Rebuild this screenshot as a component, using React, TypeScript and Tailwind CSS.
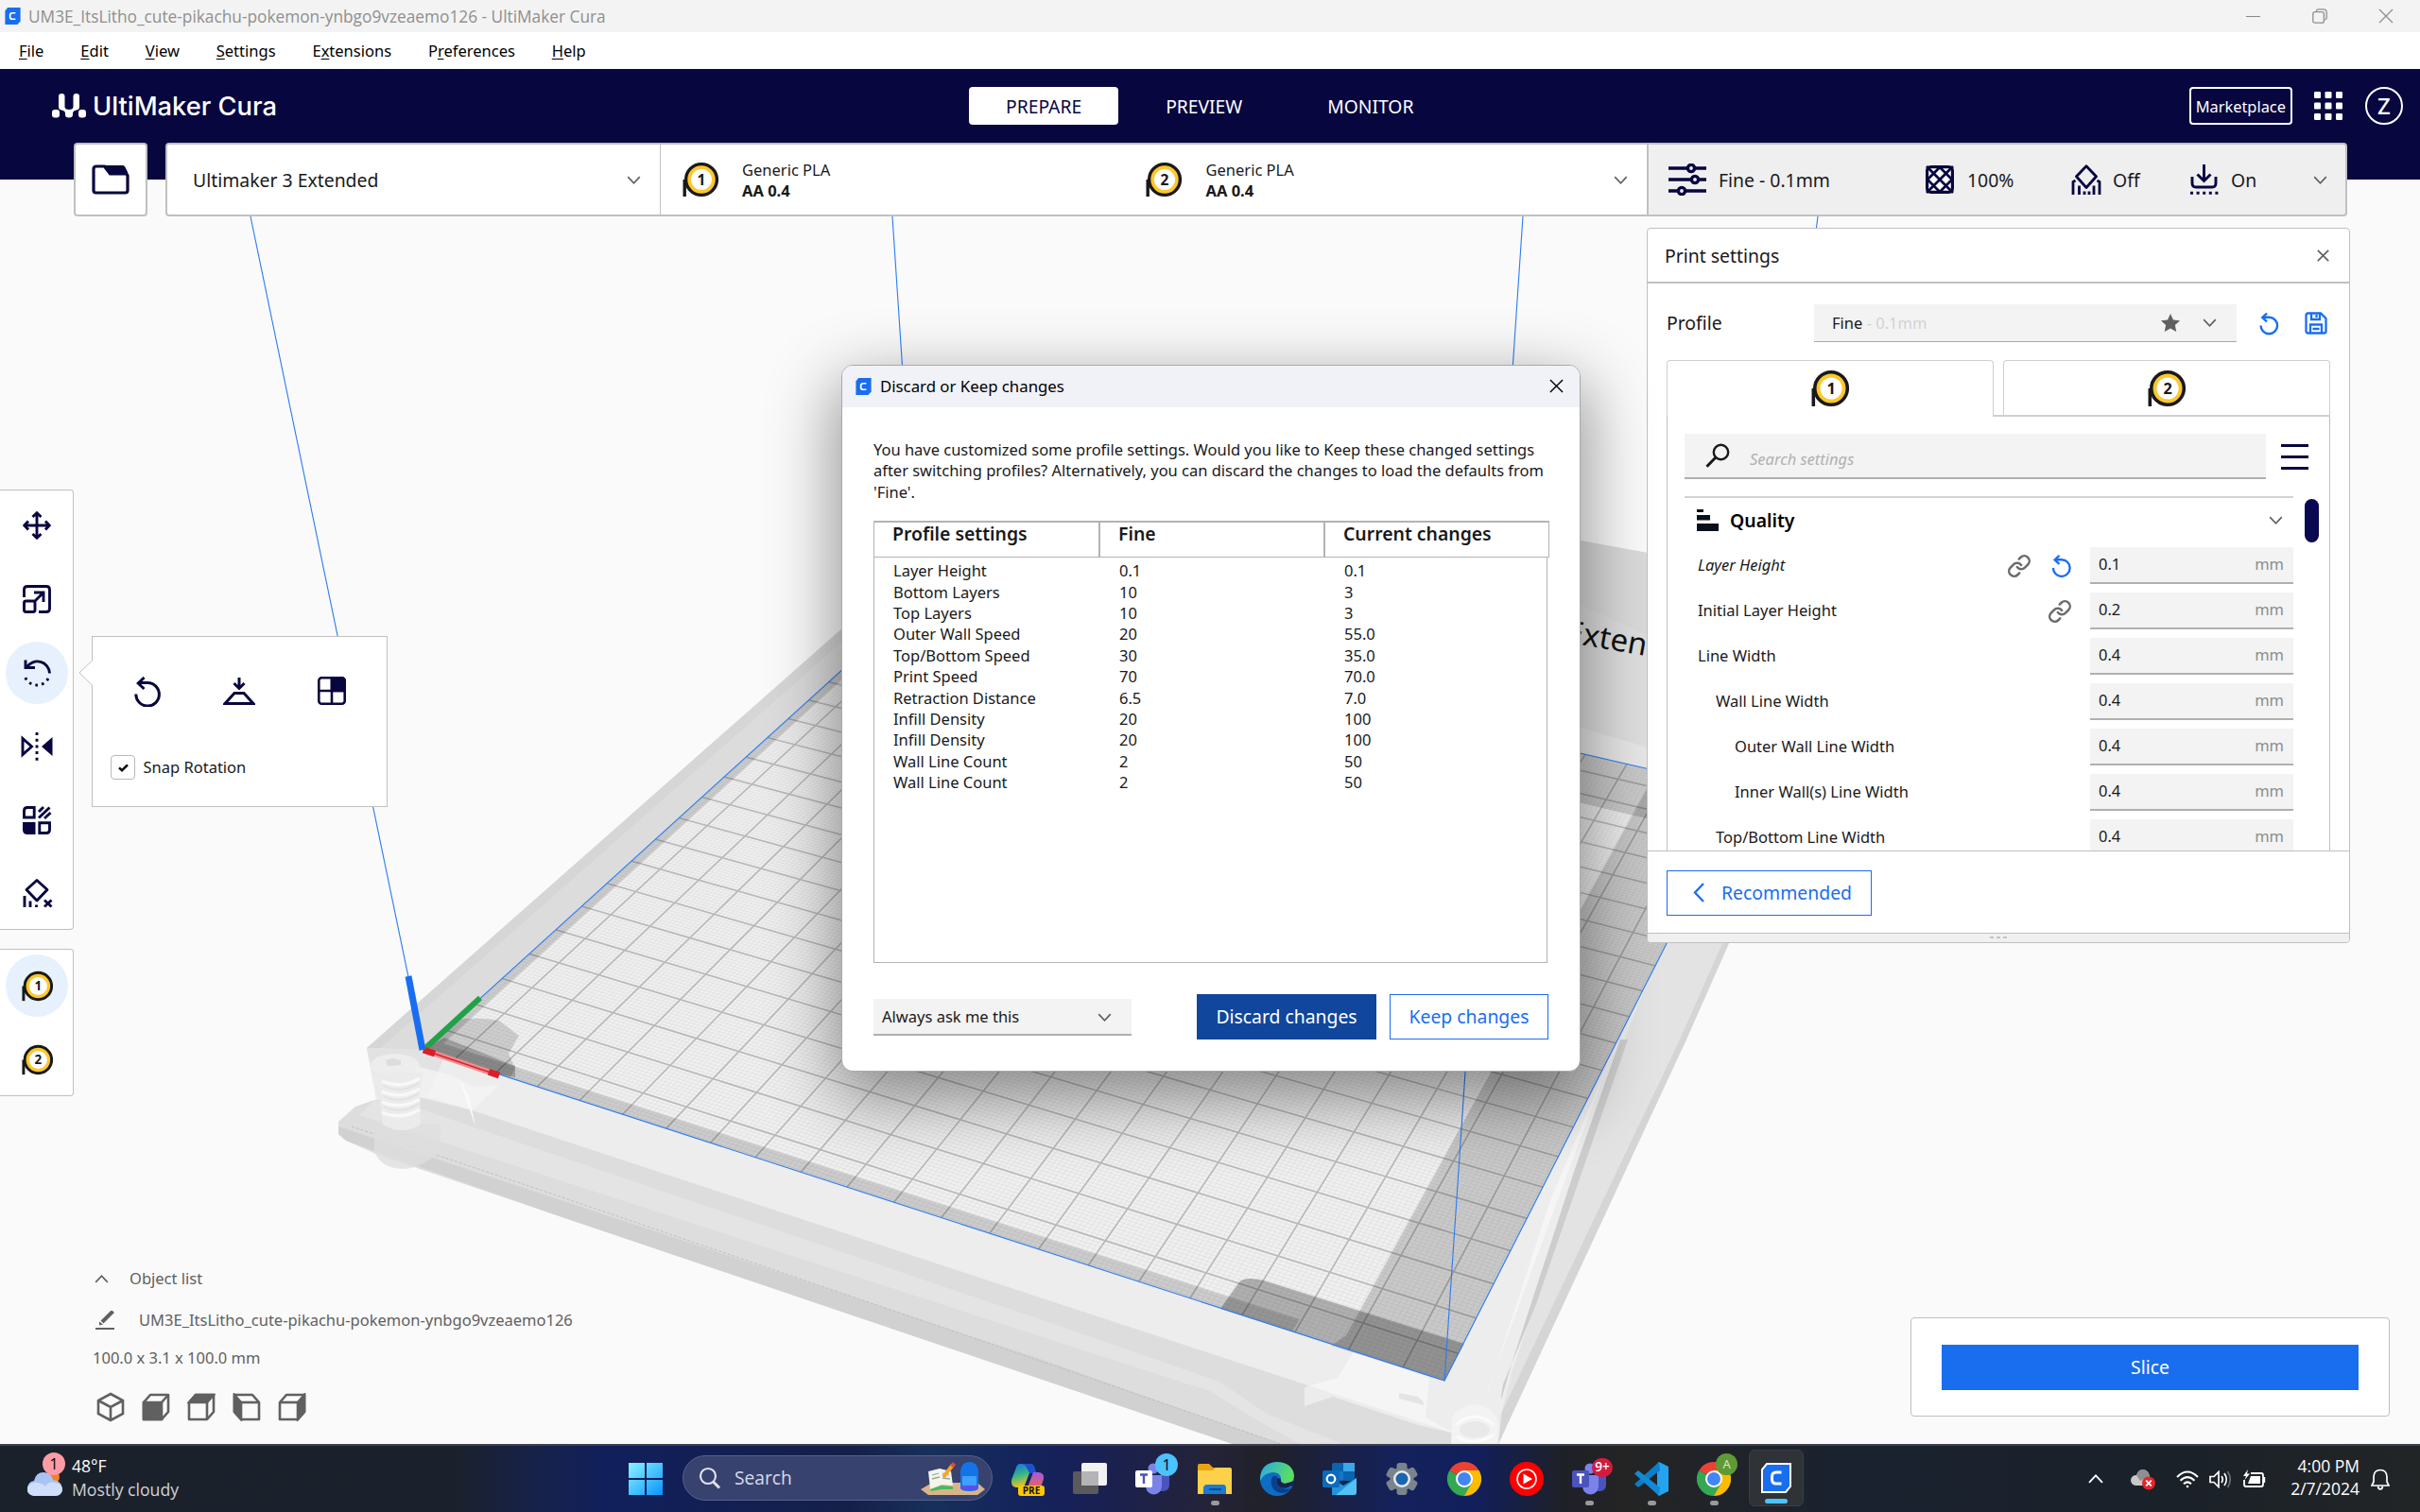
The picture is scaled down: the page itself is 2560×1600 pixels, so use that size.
import React from "react";
import { Link } from "lucide-react";

const NAVY = "#08063f";
const BLUE = "#196ef0";

/* ------------------------------------------------------------------ */
/* Small icons                                                          */
/* ------------------------------------------------------------------ */

type IconProps = { className?: string; children?: React.ReactNode; box?: string; sw?: number };

function Svg({ className = "", children, box = "0 0 30 30", sw = 2.6 }: IconProps) {
  return (
    <svg className={`shrink-0 ${className}`} viewBox={box} fill="none" stroke="currentColor" strokeWidth={sw}>
      {children}
    </svg>
  );
}

const Chevron = ({ className = "" }: { className?: string }) => (
  <Svg className={className} box="0 0 16 10" sw={1.8}>
    <path d="M1 1.2 8 8.6 15 1.2" />
  </Svg>
);

const Cross = ({ className = "", sw = 1.6 }: { className?: string; sw?: number }) => (
  <Svg className={className} box="0 0 16 16" sw={sw}>
    <path d="M1 1 15 15M15 1 1 15" />
  </Svg>
);

function Spool({ n, className = "h-[38px] w-[38px]" }: { n: number; className?: string }) {
  return (
    <svg className={`shrink-0 ${className}`} viewBox="0 0 38 38">
      <path d="M2.2 19V37" stroke="#191919" strokeWidth="3.4" />
      <circle cx="20" cy="19" r="16.4" fill="#ffc72a" stroke="#191919" strokeWidth="3.4" />
      <circle cx="20" cy="19" r="11" fill="#fff" />
      <text x="20" y="24.6" textAnchor="middle" fontSize="15.5" fontWeight="700" fontFamily="Noto Sans, sans-serif" fill="#191919">
        {n}
      </text>
    </svg>
  );
}

const Reset = ({ className = "" }: { className?: string }) => (
  <Svg className={className} box="0 0 22 25" sw={2.5}>
    <path d="M1.6 14.6A9.2 9.2 0 1 0 10.8 5.4H3.4" />
    <path d="M8.4 1 3.4 5.6 8.4 10.2" />
  </Svg>
);

function CuraLogo({ className = "" }: { className?: string }) {
  return (
    <svg className={`shrink-0 ${className}`} viewBox="0 0 18 20">
      <path d="M3 0H18V16L14.5 20H0V4Z" fill={BLUE} />
      <path d="M12.2 6.4H8.6Q5.8 6.4 5.8 9.2V10.8Q5.8 13.6 8.6 13.6H12.2" fill="none" stroke="#fff" strokeWidth="1.9" />
    </svg>
  );
}

/* ------------------------------------------------------------------ */
/* Build plate                                                          */
/* ------------------------------------------------------------------ */

const FL = [448, 1111];
const FR = [1528, 1461];
const BR = [1845, 837];
const BL = [971, 636];

/* Projects plate coordinates (0..1, 0..1) to the viewport. */
function makeProjection() {
  const dx1 = FR[0] - BR[0], dx2 = BL[0] - BR[0], dx3 = FL[0] - FR[0] + BR[0] - BL[0];
  const dy1 = FR[1] - BR[1], dy2 = BL[1] - BR[1], dy3 = FL[1] - FR[1] + BR[1] - BL[1];
  const det = dx1 * dy2 - dx2 * dy1;
  const g = (dx3 * dy2 - dx2 * dy3) / det;
  const h = (dx1 * dy3 - dx3 * dy1) / det;
  const a = FR[0] - FL[0] + g * FR[0], b = BL[0] - FL[0] + h * BL[0];
  const d = FR[1] - FL[1] + g * FR[1], e = BL[1] - FL[1] + h * BL[1];
  return (u: number, v: number) => {
    const w = g * u + h * v + 1;
    return `${((a * u + b * v + FL[0]) / w).toFixed(2)} ${((d * u + e * v + FL[1]) / w).toFixed(2)}`;
  };
}
const project = makeProjection();

function gridPath(start: number, step: number) {
  let d = "";
  for (let mm = start; mm < 215; mm += step) {
    const t = mm / 215;
    d += `M${project(t, 0)}L${project(t, 1)}M${project(0, t)}L${project(1, t)}`;
  }
  return d;
}
const quad = (u0: number, v0: number, u1: number, v1: number) =>
  `M${project(u0, v0)}L${project(u1, v0)}L${project(u1, v1)}L${project(u0, v1)}Z`;

function Scene() {
  return (
    <svg className="absolute inset-0 h-full w-full" viewBox="0 73 2560 1455" preserveAspectRatio="none">
      {/* back and left walls */}
      <path d="M900 430 1672 572 1760 590V830L900 640Z" fill="#dedede" />
      <path d="M1672 572 1760 588V680L1672 640Z" fill="#dadada" />
      <path d="M1672 770 1760 796V830L1672 805Z" fill="#e6e6e6" />
      <path d="M891 665 388 1109 396 1150 448 1111 971 636Z" fill="#dcdcdc" />
      <path d="M891 665 388 1109 390 1120 891 679Z" fill="#d6d6d6" />
      <text transform="translate(1655 679) rotate(10)" fontSize="33" fontFamily="Noto Sans, sans-serif" fill="#111">Extended</text>

      {/* right wall */}
      <path d="M1829 998 1585 1528H1500L1528 1461 1760 990Z" fill="#ededed" />
      <path d="M1829 998 1784 1100 1585 1528H1580L1600 1450 1722 1090 1760 998Z" fill="#e3e3e3" />
      <path d="M1829 998 1784 1100 1585 1528 1586 1500 1777 1100 1822 998Z" fill="#d5d5d5" />
      <path d="M1722 1100 1714 1100 1665 1240 1600 1440 1587 1485 1590 1465 1625 1380Z" fill="#cdcdcd" />
      <path d="M1704 1118 1574 1470 1570 1485 1640 1270Z" fill="#f5f5f5" />

      {/* front rail */}
      <path d="M388 1109 448 1111 1528 1461 1590 1480 1585 1528H1304L580 1283 400 1222 366 1207 358 1200V1187L376 1171 400 1176Z" fill="#ededed" />
      <path d="M388 1109 448 1111 470 1118 450 1165 400 1160Z" fill="#e2e2e2" />
      <path d="M396 1164 460 1162 1100 1373 1539 1517 1540 1528H1304L580 1283 400 1222 366 1207 358 1200V1187L376 1171Z" fill="#dddddd" />
      <path d="M396 1164 440 1172 1100 1396 1290 1462 1340 1496 1420 1528H1375L1325 1500 1280 1472 1100 1414 380 1180Z" fill="#e4e4e4" />
      <path d="M358 1192 1100 1438 1355 1528H1304L580 1283 366 1207 358 1200Z" fill="#d1d1d1" />
      <path d="M372 1192 580 1262 1100 1440 1355 1528" stroke="#c0c0c0" fill="none" strokeWidth="1" strokeDasharray="3 2" />
      <path d="M396 1200V1218Q402 1236 426 1237 450 1236 466 1216V1190L400 1186Z" fill="#dfdfdf" opacity="0.8" />
      <path d="M440 1128 478 1138 500 1150 528 1148 500 1175 440 1160Z" fill="#f4f4f4" opacity="0.8" />
      <path d="M486 1142 496 1160 503 1192 492 1160Z" fill="#fafafa" />

      {/* bed springs */}
      <ellipse cx="418" cy="1128" rx="26" ry="13" fill="#f0f0f0" opacity="0.8" />
      <path d="M394 1136 402 1164 405 1190Q425 1202 445 1190L444 1160 448 1135Z" fill="#ebebeb" />
      {[1144, 1155, 1166, 1177].map((y) => (
        <path key={y} d={`M404 ${y}Q424 ${y + 9} 444 ${y - 3}`} stroke="#f8f8f8" strokeWidth="3.5" fill="none" />
      ))}
      {[1149, 1160, 1171].map((y) => (
        <path key={y} d={`M406 ${y}Q424 ${y + 9} 443 ${y - 3}`} stroke="#dedede" strokeWidth="1.2" fill="none" />
      ))}
      <path d="M408 1122 415 1120 424 1122V1127L410 1128Z" fill="#dcdcdc" />
      <path d="M1432 1430 1512 1458 1508 1500 1539 1517 1500 1508 1410 1478 1380 1488V1468L1415 1458Z" fill="#fff" opacity="0.45" />
      <path d="M1480 1474 1500 1478 1506 1484V1487L1480 1480Z" fill="#e4e4e4" />
      <path d="M1535 1528 1536 1500Q1545 1486 1562 1486 1580 1490 1585 1505L1584 1528Z" fill="#f3f3f3" />
      <ellipse cx="1560" cy="1513" rx="16" ry="9" fill="#e9e9e9" />
      <path d="M1541 1520Q1560 1532 1580 1518M1540 1508Q1560 1490 1580 1508" stroke="#fbfbfb" strokeWidth="3" fill="none" />

      {/* plate and grid */}
      <path d={quad(0, 0, 1, 1)} fill="#f0f0f0" />
      <path d={gridPath(0.5, 1)} stroke="#dedede" strokeWidth="0.7" />
      <path d={gridPath(7.5, 10)} stroke="#b9b9b9" strokeWidth="1.7" />

      {/* translucent plate areas */}
      <path d={quad(0, 0, 0.011, 1)} fill="#000" opacity="0.15" />
      <path d={quad(0.011, 0, 0.87, 0.016)} fill="#000" opacity="0.15" />
      <path d="M1424 1413 1577 1135 1766 791 1845 837 1528 1461 1408 1424Z" fill="#000" opacity="0.16" />
      <path d={quad(0.8, 0.9, 1, 1)} fill="#000" opacity="0.15" />
      <path d="M1291 1385 1310 1358Q1315 1350 1337 1355L1549 1422 1528 1461Z" fill="#000" opacity="0.27" />
      <path d="M448 1111 482 1079Q510 1076 528 1080L549 1096 538 1115 545 1130 540 1140Z" fill="#000" opacity="0.14" />
      <path d="M448 1111 470 1098 545 1128 545 1140 530 1137Z" fill="#000" opacity="0.22" />

      {/* build volume */}
      <g stroke="#2a7bf2" strokeWidth="1.1" fill="none">
        <path d={quad(0, 0, 1, 1)} />
        <path d="M448 1111 265 229M971 636 944 229M1528 1461 1611 229M1845 837 1923 229" />
      </g>

      {/* axes */}
      <path d="M448 1111 508 1056" stroke="#24a148" strokeWidth="6" />
      <path d="M448 1111 525 1137" stroke="#f08c90" strokeWidth="6" />
      <path d="M448 1111 525 1137" stroke="#da1e28" strokeWidth="1.5" />
      <path d="M448 1111 460 1115M517 1134.3 528 1138" stroke="#da1e28" strokeWidth="7" />
      <path d="M447 1111 432 1033" stroke={BLUE} strokeWidth="7" />
    </svg>
  );
}

/* ------------------------------------------------------------------ */
/* Window chrome and header                                             */
/* ------------------------------------------------------------------ */

function TitleBar() {
  return (
    <div className="flex h-[34px] shrink-0 items-center bg-[#f3f3f3] pl-[5px] pr-[28px] text-[#8f8f8f]">
      <CuraLogo className="h-[18px] w-[17px]" />
      <span className="ml-2 mt-px font-['Open_Sans',sans-serif] text-[17.3px] leading-none">
        UM3E_ItsLitho_cute-pikachu-pokemon-ynbgo9vzeaemo126 - UltiMaker Cura
      </span>
      <div className="ml-auto flex items-center gap-[54.5px]">
        <div className="h-px w-[15px] bg-[#8a8a8a]" />
        <Svg className="h-4 w-4" box="0 0 16 16" sw={1.3}>
          <rect x="0.8" y="3.6" width="11.6" height="11.6" rx="2" />
          <path d="M4.4 3V2.6Q4.8.8 6.6.8H12Q15.2.8 15.2 4V9.6Q15.2 11.4 13.4 12" />
        </Svg>
        <Cross className="h-4 w-4" sw={1.3} />
      </div>
    </div>
  );
}

const MENU: [string, string, string][] = [
  ["", "F", "ile"],
  ["", "E", "dit"],
  ["", "V", "iew"],
  ["", "S", "ettings"],
  ["E", "x", "tensions"],
  ["P", "r", "eferences"],
  ["", "H", "elp"],
];

function MenuBar() {
  return (
    <div className="flex h-[39px] shrink-0 items-center gap-[38.9px] bg-white pl-5 pt-0.5 text-[16.5px] text-black">
      {MENU.map(([a, b, c]) => (
        <span key={b}>
          {a}
          <span className="underline decoration-1 underline-offset-2">{b}</span>
          {c}
        </span>
      ))}
    </div>
  );
}

function Header() {
  return (
    <div className="relative flex h-[78px] shrink-0 items-center text-white">
      <div className="flex w-[1025px] items-center pl-[55px]">
        <svg className="h-[26px] w-9" viewBox="0 0 36 26" fill="#fff">
          <rect x="0" y="17" width="8" height="8.5" rx="3" />
          <rect x="28" y="17" width="8" height="8.5" rx="3" />
          <path d="M7 3Q7 0 10.3 0 13.5 0 13.5 3V14Q13.5 17 18 17 22.5 17 22.5 14V3Q22.5 0 25.7 0 29 0 29 3V14Q29 17 26 17.5 22 18 22 21V22.5Q22 25.5 18 25.5 14 25.5 14 22.5V21Q14 18 10 17.5 7 17 7 14Z" />
          <rect x="16.5" y="0" width="3" height="16" fill={NAVY} />
        </svg>
        <span className="ml-[7px] mt-0.5 font-['Inter',sans-serif] text-[27.3px] font-medium leading-none">UltiMaker Cura</span>
      </div>
      <div className="flex items-center gap-2.5 text-[19.3px]">
        <div className="flex h-10 items-center rounded bg-white px-[39px] pt-0.5 text-[#08063f]">PREPARE</div>
        <div className="px-10 pt-0.5">PREVIEW</div>
        <div className="px-10 pt-0.5">MONITOR</div>
      </div>
      <div className="ml-auto flex items-center pr-[18px]">
        <div className="flex h-10 items-center rounded border-2 border-white px-[5px] pt-0.5 text-[16.4px] leading-none">Marketplace</div>
        <svg className="ml-[23px] h-[30px] w-[30px]" viewBox="0 0 30 30" fill="#fff">
          {[0, 11.5, 23].map((y) => [0, 11.5, 23].map((x) => <rect key={`${x}-${y}`} x={x} y={y} width="7" height="7" rx="1.2" />))}
        </svg>
        <div className="ml-6 flex h-10 w-10 items-center justify-center rounded-full border-2 border-white text-[24px] font-medium leading-none">Z</div>
      </div>
    </div>
  );
}

/* ------------------------------------------------------------------ */
/* Stage bar                                                            */
/* ------------------------------------------------------------------ */

function Extruder({ n }: { n: number }) {
  return (
    <div className="flex w-[490.5px] items-center">
      <Spool n={n} />
      <div className="ml-[25.5px] pt-px text-[16.5px] leading-[22px]">
        <div>Generic PLA</div>
        <div className="font-bold">AA 0.4</div>
      </div>
    </div>
  );
}

function StageBar() {
  return (
    <div className="relative flex h-[78px] shrink-0 pl-[78px] text-[#191919]">
      <div className="flex w-[78px] items-center justify-center rounded border-2 border-[#c0c0c0] bg-white">
        <Svg className="h-8 w-10 text-[#08063f]" box="0 0 40 32" sw={3.2}>
          <path d="M5 2H13.5L19.5 10H35.5Q38 10 38 12.5V27.5Q38 30 35.5 30H4.5Q2 30 2 27.5V5Q2 2 5 2Z" />
          <path d="M13 1H33Q35 1 36 4L38 8V11H20Z" fill="currentColor" stroke="none" />
        </Svg>
      </div>
      <div className="ml-[19px] flex flex-1 rounded border-2 border-[#c0c0c0] bg-white">
        <div className="flex w-[522px] items-center justify-between border-r border-[#c0c0c0] pl-[27px] pr-5 text-[19.4px]">
          <span className="pt-0.5">Ultimaker 3 Extended</span>
          <Chevron className="h-[9px] w-[15px] text-[#606060]" />
        </div>
        <div className="flex flex-1 items-center pl-[22.5px] pr-[22px]">
          <Extruder n={1} />
          <Extruder n={2} />
          <Chevron className="ml-auto h-[9px] w-[15px] text-[#606060]" />
        </div>
      </div>
      <div className="-ml-1 mr-[77px] flex w-[741px] items-center rounded-r border-2 border-[#c0c0c0] bg-[#efefef] pl-[21px] text-[19.4px]">
        <div className="flex w-[272px] items-center">
          <Svg className="h-[34px] w-10 text-[#08063f]" box="0 0 40 34" sw={3.4}>
            <path d="M0 5H19M29 5H40M0 17H23M33 17H40M0 29H9M19 29H40" />
            <circle cx="24" cy="5" r="3.6" />
            <circle cx="28" cy="17" r="3.6" />
            <circle cx="14" cy="29" r="3.6" />
          </Svg>
          <span className="ml-[13px] pt-0.5">Fine - 0.1mm</span>
        </div>
        <div className="flex w-[154px] items-center">
          <Svg className="h-[30px] w-[30px] text-[#08063f]" sw={2.8}>
            <rect x="1.6" y="1.6" width="26.8" height="26.8" rx="4" fill="#fff" strokeWidth="3.2" />
            <path d="M1 16 16 1M1 29 29 1M14 29 29 14M29 16 14 1M29 29 1 1M16 29 1 14" />
          </Svg>
          <span className="ml-3.5 pt-0.5">100%</span>
        </div>
        <div className="flex w-[125px] items-center">
          <Svg className="h-8 w-8 text-[#08063f]" box="0 0 32 32" sw={2.8}>
            <path d="M16 1.8 26.5 12.8 16 24.5 5.5 12.8Z" strokeLinejoin="round" />
            <path d="M2 32V18.5L4.5 17M8.5 32V22.5M14 32V28.5M19 32V28.5M24 32V22.5M30 32V18.5L27.5 17" />
          </Svg>
          <span className="ml-3 pt-0.5">Off</span>
        </div>
        <div className="flex items-center">
          <Svg className="h-8 w-[31px] text-[#08063f]" box="0 0 31 32" sw={2.9}>
            <path d="M15.5 0V16.5M8.5 10.5 15.5 17.5 22.5 10.5" />
            <path d="M3 13V20Q3 24 7 24H24Q28 24 28 20V13" />
            <path d="M1 30.3H31" strokeDasharray="3 3.6" />
          </Svg>
          <span className="ml-[13px] pt-0.5">On</span>
        </div>
        <Chevron className="ml-auto mr-[19px] h-[9px] w-[15px] text-[#606060]" />
      </div>
    </div>
  );
}

/* ------------------------------------------------------------------ */
/* Left side                                                            */
/* ------------------------------------------------------------------ */

const TOOL_ICONS: React.ReactNode[] = [
  <g key="move">
    <path d="M15 2V28M2 15H28M10.5 6 15 1.8 19.5 6M10.5 24 15 28.2 19.5 24M6 10.5 1.8 15 6 19.5M24 10.5 28.2 15 24 19.5" />
  </g>,
  <g key="scale">
    <path d="M1.5 13V5Q1.5 1.5 5 1.5H25Q28.5 1.5 28.5 5V25Q28.5 28.5 25 28.5H17" />
    <rect x="1.5" y="17" width="11.5" height="11.5" rx="2" />
    <path d="M12.5 17.5 22 8M12 8H22V18" />
  </g>,
  <g key="rotate">
    <path d="M28.5 15.5A13 13 0 0 0 4.5 9M3 1.5V9.5H13" />
    <path d="M27 21A13.5 13.5 0 0 1 1.8 16.5" strokeDasharray="2.6 4.2" />
  </g>,
  <g key="mirror">
    <path d="M0 6.5V23.5L9.5 15Z" />
    <path d="M31.5 5V25L20 15Z" fill="currentColor" stroke="none" />
    <path d="M15 0V30" strokeDasharray="3 3.7" />
  </g>,
  <g key="models">
    <path d="M12.2 1.5V12H1.5V5Q1.5 1.5 5 1.5Z" />
    <path d="M0 17H13.5V30H5Q0 30 0 25Z" fill="currentColor" stroke="none" />
    <path d="M17.8 17.8H28.5V25Q28.5 28.5 25 28.5H17.8Z" />
    <path d="M17 6 22 1M17 12.5 28.5 1.5M23 13 29.5 7" />
  </g>,
  <g key="blocker">
    <path d="M15 0.5 26 10.5 15 22 4 10.5Z" strokeLinejoin="round" />
    <path d="M2 29V17M8 29V22.5M14.5 29V26.5M23 21.5 30.5 28.5M30.5 21.5 23 28.5" />
  </g>,
];

function ToolBar() {
  return (
    <div className="flex w-[78px] flex-col gap-3 rounded-r border border-l-0 border-[#c0c0c0] bg-white py-1 pl-1.5 text-[#08063f]">
      {TOOL_ICONS.map((icon, i) => (
        <div key={i} className={`flex h-[66px] w-[66px] items-center justify-center rounded-full ${i === 2 ? "bg-[#e6f1fd]" : ""}`}>
          <Svg className="h-[30px] w-[30px] overflow-visible" sw={2.9}>{icon}</Svg>
        </div>
      ))}
    </div>
  );
}

function RotatePanel() {
  return (
    <div className="absolute left-[97px] top-[444px] h-[181px] w-[313px] border border-[#c0c0c0] bg-white text-[#08063f]">
      <svg className="absolute -left-[15px] top-6 h-7 w-4" viewBox="0 0 16 28">
        <path d="M15.5 0 1 14 15.5 28" fill="#fff" stroke="#c0c0c0" />
        <path d="M15.5 1V27" stroke="#fff" strokeWidth="1.6" />
      </svg>
      <div className="mt-[42px] flex justify-between pl-[44px] pr-[43px]">
        <Svg className="h-8 w-[28px]" box="0 0 28 32" sw={3}>
          <path d="M1.8 18.5A12.3 12.3 0 1 0 14 6.5H4" />
          <path d="M10.5 1 4.2 7 10.5 13" />
        </Svg>
        <Svg className="h-8 w-[34px]" box="0 0 34 32" sw={3}>
          <path d="M17 1V12M11.5 7 17 12.5 22.5 7M12 17.5H22L32 28.5H2Z" />
        </Svg>
        <Svg className="h-[30px] w-[30px]">
          <rect x="1.3" y="1.3" width="27.4" height="27.4" rx="3" />
          <path d="M15 1H26L29 4V15H15Z" fill="currentColor" />
          <path d="M15 1V29M1 15H29" />
        </Svg>
      </div>
      <div className="mt-[51px] flex items-center pl-[19px]">
        <div className="flex h-[26px] w-[26px] items-center justify-center rounded border-[1.5px] border-[#b8b8b8]">
          <Svg className="h-[9px] w-[11px] text-[#111]" box="0 0 11 9" sw={2.6}>
            <path d="M1 4.4 4 7.2 10 1.4" />
          </Svg>
        </div>
        <span className="ml-[8.5px] text-[16.5px] leading-6 text-[#191919]">Snap Rotation</span>
      </div>
    </div>
  );
}

function ObjectInfo() {
  const cubeA = "M2 10 9 2H28V20L21 28H2Z";
  return (
    <div className="mb-[23px] flex flex-col pl-[98px] text-[16.5px] text-[#606060]">
      <div className="flex h-[44px] items-center">
        <Chevron className="ml-0.5 h-[9px] w-[15px] rotate-180" />
        <span className="ml-[22px] pt-px">Object list</span>
      </div>
      <div className="flex h-[44px] items-center">
        <Svg className="ml-[3px] h-5 w-5" box="0 0 20 20" sw={2}>
          <path d="M0 19H20" />
          <path d="M7 12 18.5 0.5" strokeWidth="4" />
          <path d="M4 15.4V11.5L8 14.5Z" fill="currentColor" stroke="none" />
        </Svg>
        <span className="ml-[26px] pt-px">UM3E_ItsLitho_cute-pikachu-pokemon-ynbgo9vzeaemo126</span>
      </div>
      <div className="flex h-[34px] items-center pt-0.5">100.0 x 3.1 x 100.0 mm</div>
      <div className="mt-5 flex items-center gap-[18px] pl-1">
        <Svg className="h-[32px] w-[30px]" box="0 0 30 32" sw={2.6}>
          <path d="M15 2 28 9V23L15 30 2 23V9ZM2 9 15 16 28 9M15 16V30" />
        </Svg>
        <Svg className="h-[30px] w-[30px]" sw={2.6}>
          <path d={cubeA} strokeLinejoin="round" />
          <path d="M2 10H21V28H2Z" fill="currentColor" />
          <path d="M21 10 28 2" />
        </Svg>
        <Svg className="h-[30px] w-[30px]" sw={2.6}>
          <path d={cubeA} strokeLinejoin="round" />
          <path d="M2 10 9 2H28L21 10Z" fill="currentColor" />
          <path d="M21 10V28" />
        </Svg>
        <Svg className="h-[30px] w-[30px]" sw={2.6}>
          <path d="M28 10 21 2H2V20L9 28H28Z" strokeLinejoin="round" />
          <path d="M2 2 9 10V28L2 20Z" fill="currentColor" />
          <path d="M9 10H28" />
        </Svg>
        <Svg className="h-[30px] w-[30px]" sw={2.6}>
          <path d={cubeA} strokeLinejoin="round" />
          <path d="M21 10 28 2V20L21 28Z" fill="currentColor" />
          <path d="M2 10H21" />
        </Svg>
      </div>
    </div>
  );
}

/* ------------------------------------------------------------------ */
/* Print settings                                                       */
/* ------------------------------------------------------------------ */

const ROWS: { label: string; value: string; pad: string; link?: boolean; reset?: boolean }[] = [
  { label: "Layer Height", value: "0.1", pad: "pl-3.5", link: true, reset: true },
  { label: "Initial Layer Height", value: "0.2", pad: "pl-3.5", link: true },
  { label: "Line Width", value: "0.4", pad: "pl-3.5" },
  { label: "Wall Line Width", value: "0.4", pad: "pl-[33px]" },
  { label: "Outer Wall Line Width", value: "0.4", pad: "pl-[53px]" },
  { label: "Inner Wall(s) Line Width", value: "0.4", pad: "pl-[53px]" },
  { label: "Top/Bottom Line Width", value: "0.4", pad: "pl-[33px]" },
];

function PrintSettings() {
  return (
    <div className="flex h-[757px] w-[744px] flex-col rounded border border-[#c0c0c0] bg-white text-[#191919]">
      <div className="flex h-[58px] shrink-0 items-center justify-between border-b-2 border-[#c0c0c0] pl-[18px] pr-[21px] text-[19.4px]">
        <span className="mt-px">Print settings</span>
        <Cross className="h-[13px] w-[13px] text-[#606060]" sw={2} />
      </div>
      <div className="mt-[22px] flex h-10 shrink-0 items-center pl-5">
        <span className="w-[156px] text-[19.4px]">Profile</span>
        <div className="flex h-10 w-[447px] items-center border-b border-[#a8a8a8] bg-[#f3f3f3] pl-[19px] pr-[21px] text-[16.5px]">
          <span className="pt-px">
            Fine <span className="text-[#d2d2d2]">- 0.1mm</span>
          </span>
          <svg className="ml-auto h-[19px] w-5 text-[#606060]" viewBox="0 0 20 19" fill="currentColor">
            <path d="M10 0 13 6.4 20 7.3 14.9 12 16.2 19 10 15.6 3.8 19 5.1 12 0 7.3 7 6.4Z" />
          </svg>
          <Chevron className="ml-6 h-[9px] w-[15px] text-[#606060]" />
        </div>
        <Reset className="ml-6 h-[25px] w-[21px] text-[#196ef0]" />
        <Svg className="ml-[27px] h-6 w-6 text-[#196ef0]" box="0 0 24 24" sw={2.3}>
          <path d="M3.5 1.5H17L22.5 7V20.5Q22.5 22.5 20.5 22.5H3.5Q1.5 22.5 1.5 20.5V3.5Q1.5 1.5 3.5 1.5Z" />
          <path d="M7 1.5V8H16V1.5M12.5 3V6M6 22.5V13.5H18V22.5M8.5 18H15.5" />
        </Svg>
      </div>
      <div className="mt-[19px] flex shrink-0 px-5">
        <div className="flex h-[60px] w-[346px] items-center justify-center rounded-t border border-b-0 border-[#cfcfcf] pb-0.5">
          <Spool n={1} className="h-10 w-10" />
        </div>
        <div className="w-2.5 border-b-2 border-[#cfcfcf]" />
        <div className="flex h-[60px] w-[346px] items-center justify-center rounded-t border border-b-2 border-[#cfcfcf] pr-px">
          <Spool n={2} className="h-10 w-10" />
        </div>
      </div>
      <div className="mx-5 flex h-[459px] shrink-0 flex-col overflow-hidden border-x border-[#c0c0c0] pl-[18px]">
        <div className="mt-[18px] flex items-center">
          <div className="flex h-12 w-[615px] items-center border-b-2 border-[#b0b0b0] bg-[#f3f3f3] pl-[22px] italic text-[#b0b0b0]">
            <Svg className="h-[26px] w-[26px] text-[#191919]" box="0 0 26 26" sw={2.4}>
              <circle cx="16.5" cy="9.5" r="7.7" />
              <path d="M11 15 1.5 24.8" strokeWidth="3" />
            </Svg>
            <span className="ml-[21px] mt-2 text-[16.5px]">Search settings</span>
          </div>
          <div className="ml-4 flex h-[27px] w-[29px] flex-col justify-between">
            <div className="h-[3px] bg-[#08063f]" />
            <div className="h-[3px] bg-[#08063f]" />
            <div className="h-[3px] bg-[#08063f]" />
          </div>
        </div>
        <div className="mt-[18px] flex">
          <div className="w-[644px] border-t-2 border-[#d2d2d2]">
            <div className="flex h-[52px] items-center pb-[5px] pl-[13px] pr-[11px]">
              <svg className="h-[23px] w-[23px]" viewBox="0 0 23 23" fill="#08101c">
                <rect x="0" y="0" width="7" height="3" />
                <rect x="0" y="6" width="14" height="5.5" />
                <rect x="0" y="15" width="23" height="8" />
              </svg>
              <span className="ml-3 text-[19.4px] font-semibold text-black">Quality</span>
              <Chevron className="ml-auto h-[9px] w-[15px] text-[#606060]" />
            </div>
            {ROWS.map((r) => (
              <div key={r.label} className={`mb-[9px] flex h-[39px] items-center text-[16.5px] ${r.pad}`}>
                <span className={r.reset ? "italic" : ""}>{r.label}</span>
                <div className="ml-auto flex items-center gap-[21px] pr-[19px]">
                  {r.link && <Link size={26} strokeWidth={2.3} className="text-[#6b6b6b]" />}
                  {r.reset && <Reset className="h-6 w-[22px] text-[#196ef0]" />}
                </div>
                <div className="flex h-[39px] w-[215px] items-center justify-between border-b-2 border-[#b0b0b0] bg-[#f3f3f3] pl-[9px] pr-2.5">
                  <span>{r.value}</span>
                  <span className="text-[#8c8c8c]">mm</span>
                </div>
              </div>
            ))}
          </div>
          <div className="ml-3 mt-[3px] h-[46px] w-[15px] rounded-full bg-[#0a0850]" />
        </div>
      </div>
      <div className="flex flex-1 items-center border-t border-[#c0c0c0] pl-5 pt-px">
        <div className="flex h-12 w-[217px] items-center border-[1.5px] border-[#196ef0] pl-[27px] text-[19.4px] text-[#196ef0]">
          <Svg className="h-[21px] w-3" box="0 0 12 21" sw={2.3}>
            <path d="M11 1 2 10.5 11 20" />
          </Svg>
          <span className="ml-[18px]">Recommended</span>
        </div>
      </div>
      <div className="flex h-2.5 shrink-0 items-start justify-center gap-[3px] rounded-b border-t border-[#c0c0c0] bg-[#f0f0f0] pt-[3px]">
        <div className="h-0.5 w-1 bg-[#c4c4c4]" />
        <div className="h-0.5 w-1 bg-[#c4c4c4]" />
        <div className="h-0.5 w-1 bg-[#c4c4c4]" />
      </div>
    </div>
  );
}

/* ------------------------------------------------------------------ */
/* Dialog                                                               */
/* ------------------------------------------------------------------ */

const CHANGES: [string, string, string][] = [
  ["Layer Height", "0.1", "0.1"],
  ["Bottom Layers", "10", "3"],
  ["Top Layers", "10", "3"],
  ["Outer Wall Speed", "20", "55.0"],
  ["Top/Bottom Speed", "30", "35.0"],
  ["Print Speed", "70", "70.0"],
  ["Retraction Distance", "6.5", "7.0"],
  ["Infill Density", "20", "100"],
  ["Infill Density", "20", "100"],
  ["Wall Line Count", "2", "50"],
  ["Wall Line Count", "2", "50"],
];

function Dialog() {
  return (
    <div className="absolute left-[890px] top-[386px] flex h-[748px] w-[782px] flex-col overflow-hidden rounded-xl border-[1.5px] border-[#a9a9a9] bg-white text-[#191919] shadow-[0_24px_70px_6px_rgba(0,0,0,0.42)]">
      <div className="flex h-[44px] shrink-0 items-center bg-[#f0f2f8] pb-px pl-[14px] pr-[17px]">
        <CuraLogo className="h-[18px] w-[17px]" />
        <span className="ml-[9px] text-[16.8px] text-black">Discard or Keep changes</span>
        <Cross className="ml-auto h-[15px] w-[15px] text-black" sw={1.5} />
      </div>
      <p className="mt-[34px] whitespace-nowrap pl-[33px] text-[16.48px] leading-[22.4px]">
        You have customized some profile settings. Would you like to Keep these changed settings
        <br />
        after switching profiles? Alternatively, you can discard the changes to load the defaults from
        <br />
        'Fine'.
      </p>
      <div className="ml-[33px] mt-[19px] flex h-[468px] w-[715px] flex-col">
        <div className="grid h-[39px] shrink-0 grid-cols-[239px_238px_236px] border border-t-2 border-[#b3b3b3] text-[19.4px] font-semibold leading-[24px]">
          <div className="border-r-2 border-[#b3b3b3] pl-[19px]">Profile settings</div>
          <div className="border-r-2 border-[#b3b3b3] pl-[19px]">Fine</div>
          <div className="pl-[19px]">Current changes</div>
        </div>
        <div className="mr-0.5 flex-1 border border-t-0 border-[#b3b3b3] pt-[3px]">
          {CHANGES.map((row, i) => (
            <div key={i} className="grid h-[22.4px] grid-cols-[239px_238px_auto] pl-5 text-[16.5px] leading-[22.4px]">
              <span>{row[0]}</span>
              <span>{row[1]}</span>
              <span>{row[2]}</span>
            </div>
          ))}
        </div>
      </div>
      <div className="mt-[32.5px] flex pl-[33px]">
        <div className="mt-[5px] flex h-[39px] w-[273px] items-center justify-between border-b-2 border-[#b0b0b0] bg-[#f3f3f3] pl-[9px] pr-[21px] pt-0.5 text-[16.5px]">
          <span>Always ask me this</span>
          <Chevron className="h-[9px] w-[15px] text-[#606060]" />
        </div>
        <div className="ml-[69px] flex h-12 w-[190px] items-center justify-center bg-[#10469c] text-[19.35px] text-white">Discard changes</div>
        <div className="ml-3.5 flex h-12 w-[168px] items-center justify-center border-[1.5px] border-[#196ef0] text-[19.35px] text-[#196ef0]">Keep changes</div>
      </div>
    </div>
  );
}

/* ------------------------------------------------------------------ */
/* Taskbar                                                              */
/* ------------------------------------------------------------------ */

const Chrome = () => (
  <svg className="h-9 w-9" viewBox="0 0 36 36">
    <path d="M18 18 2.4 9A18 18 0 0 1 33.6 9Z" fill="#ea4335" />
    <path d="M18 18 33.6 9A18 18 0 0 1 18 36Z" fill="#fbbc04" />
    <path d="M18 18V36A18 18 0 0 1 2.4 9Z" fill="#34a853" />
    <path d="M18 9H33.6L26 22 18 36 25.8 22.5Z" fill="#fbbc04" />
    <path d="M2.4 9 10.2 22.5 18 27 25.8 22.5 18 36 10 34 0 20Z" fill="#34a853" />
    <circle cx="18" cy="18" r="9" fill="#fff" />
    <circle cx="18" cy="18" r="7" fill="#4285f4" />
  </svg>
);

const Teams = ({ light = false }: { light?: boolean }) => (
  <svg className="h-9 w-9" viewBox="0 0 36 36">
    <circle cx="19" cy="7" r="5.5" fill="#7b83eb" />
    <circle cx="30" cy="9" r="4" fill="#5059c9" />
    <path d="M24 14H36V24Q36 30 30 31H22Z" fill="#4b53bc" />
    <path d="M11 14H28V26Q27 34 19.5 34.5 12 34 11 26Z" fill="#7b83eb" />
    <rect x="0" y="9" width="18" height="18" rx="2" fill={light ? "#ffffff" : "#4b53bc"} />
    <path d="M5 13.5H13M9 13.5V23" stroke={light ? "#4b53bc" : "#ffffff"} strokeWidth="2.4" />
  </svg>
);

function TaskIcon({ children, dot = false, badge }: { children: React.ReactNode; dot?: boolean; badge?: React.ReactNode }) {
  return (
    <div className="relative flex h-[70px] w-[66px] items-center justify-center">
      {children}
      {dot && <div className="absolute bottom-[7px] h-[5px] w-[9px] rounded-full bg-[#9a9a9a]" />}
      {badge}
    </div>
  );
}

function TaskBar() {
  return (
    <div className="relative flex h-[72px] shrink-0 border-t-2 border-[#3d414d] bg-[linear-gradient(90deg,#1b212b_0px,#1b212c_480px,#16224a_570px,#111f5c_640px,#152049_900px,#17305a_985px,#14245c_1080px,#172059_1130px,#242338_1280px,#202129_1340px,#14215c_1480px,#111f5c_1560px,#1e2029_1650px,#242424_1720px,#1a2230_1950px,#1b2129_2300px,#222526_2560px)] font-['Open_Sans',sans-serif] text-white">
      <div className="relative h-full w-[76px]">
        <svg className="absolute left-7 top-[23px] h-8 w-10" viewBox="0 0 40 32">
          <circle cx="28" cy="10" r="7" fill="#f58220" />
          <path d="M8 30Q0 29 1 21 2 15 8 14 10 5 18 5 26 5 28 13 37 14 38 22 38 29 31 30Z" fill="#a9c3f3" />
          <path d="M8 30Q0 29 1 21 5 15 12 16 18 17 20 20 23 14 30 16 38 17 38 24 37 29 31 30Z" fill="#cfdefa" />
        </svg>
        <div className="absolute left-[45px] top-[7px] flex h-6 w-6 items-center justify-center rounded-full bg-[#ff9ba5] text-[16px] leading-none text-black">1</div>
      </div>
      <div className="flex flex-col pt-[9px] leading-[25px]">
        <span className="text-[17.5px]">48°F</span>
        <span className="text-[17.65px] text-[#d0d2d6]">Mostly cloudy</span>
      </div>
      <svg className="absolute left-[665px] top-[17px] h-9 w-9" viewBox="0 0 36 36">
        <defs>
          <linearGradient id="win" x1="0" y1="0" x2="1" y2="1">
            <stop offset="0" stopColor="#8af5ff" />
            <stop offset="1" stopColor="#0a93ff" />
          </linearGradient>
        </defs>
        <path d="M0 1H17V17H0ZM19 1H36V17H19ZM0 19H17V35H0ZM19 19H36V35H19Z" fill="url(#win)" />
      </svg>
      <div className="absolute left-[722px] top-2.5 flex h-12 w-[328px] items-center rounded-full border border-[#56608c] bg-[#38426f] pl-4 pr-[7px]">
        <Svg className="h-6 w-6 text-[#dfe2ec]" box="0 0 24 24" sw={2.2}>
          <circle cx="10" cy="10" r="8" />
          <path d="M15.5 16 22 22.5" strokeWidth="3" />
        </Svg>
        <span className="ml-[14px] text-[19.2px] text-[#d7daea]">Search</span>
        <svg className="ml-auto h-[38px] w-[68px]" viewBox="0 0 68 38">
          <path d="M0 31 12 24H60L68 31 60 37H8Z" fill="#d9b48a" />
          <path d="M8 12 20 9 32 12 34 27 22 26 10 31Z" fill="#f3f5ee" />
          <path d="M10 31 22 27 34 28V31L22 31 11 33Z" fill="#48b95c" />
          <path d="M12 16 19 14M12 20 20 18M23 14 30 16M23 19 31 20" stroke="#9aa79a" strokeWidth="1.3" />
          <path d="M24 18 34 5" stroke="#f5a623" strokeWidth="4" />
          <path d="M33 7 35.5 3.5" stroke="#e8453c" strokeWidth="4" />
          <path d="M42 30V12Q43 2 51.5 2 60 2 61 12V30Q60 33 51.5 33 43 33 42 30Z" fill="#1573e8" />
          <path d="M44 17H59V27H44Z" fill="#3ea1ff" />
          <path d="M43 29H60" stroke="#7a3ff0" strokeWidth="3" />
        </svg>
      </div>
      <div className="absolute left-[1054px] top-0 flex">
        <TaskIcon>
          <svg className="h-9 w-9" viewBox="0 0 36 36">
            <defs>
              <linearGradient id="cop1" x1="0" y1="0" x2="0.3" y2="1">
                <stop offset="0" stopColor="#1b6fe0" />
                <stop offset="0.5" stopColor="#2fb58c" />
                <stop offset="1" stopColor="#f0c419" />
              </linearGradient>
              <linearGradient id="cop2" x1="0" y1="0" x2="0" y2="1">
                <stop offset="0" stopColor="#a05be0" />
                <stop offset="1" stopColor="#f0605a" />
              </linearGradient>
            </defs>
            <path d="M10 2H20Q24 2 25 5L27 12H20L14 27H6Q0 26 1 19L6 6Q7 2 10 2Z" fill="url(#cop1)" />
            <path d="M10 2H20Q24 2 25 5L27 12H20L17 6Q15 2 10 2Z" fill="#1d4fd0" />
            <path d="M24 11H30Q36 12 35 18L32 27H18Z" fill="url(#cop2)" />
            <rect x="8" y="25" width="28" height="11" rx="3" fill="#fdc60b" />
            <text x="22" y="34.3" fontSize="10" fontWeight="700" textAnchor="middle" fill="#111" fontFamily="Open Sans, sans-serif">PRE</text>
          </svg>
        </TaskIcon>
        <TaskIcon>
          <svg className="h-9 w-9" viewBox="0 0 36 36">
            <rect x="0" y="10" width="27" height="24" rx="2" fill="#5a5a5c" />
            <rect x="9" y="1" width="27" height="24" rx="2" fill="#f2f2f2" />
            <rect x="9" y="10" width="18" height="15" fill="#b4b4b6" />
          </svg>
        </TaskIcon>
        <TaskIcon badge={<div className="absolute left-9 top-2 flex h-6 w-6 items-center justify-center rounded-full bg-[#4cc2ff] text-[16px] leading-none text-black">1</div>}>
          <Teams light />
        </TaskIcon>
        <TaskIcon dot>
          <svg className="h-9 w-9" viewBox="0 0 36 36">
            <path d="M0 4Q0 2 2 2H12L16 6H34V14H0Z" fill="#e8a317" />
            <path d="M0 9H16L19 6H34Q36 6 36 8V34H0Z" fill="#ffd04a" />
            <path d="M6 34V28Q6 24 10 24H27Q30 24 30 28V34Z" fill="#1a7ad4" />
            <path d="M12 29H25" stroke="#0b4f94" strokeWidth="2" />
          </svg>
        </TaskIcon>
        <TaskIcon>
          <svg className="h-9 w-9" viewBox="0 0 36 36">
            <defs>
              <linearGradient id="edge" x1="0" y1="0" x2="1" y2="0.3">
                <stop offset="0" stopColor="#2aa8e8" />
                <stop offset="1" stopColor="#5ade62" />
              </linearGradient>
            </defs>
            <circle cx="18" cy="18" r="18" fill="#0f6cc4" />
            <path d="M0 17Q1 1 18 0 35 1 36 15 35 23 27 23 21 22 22 18 22 11 13 11 4 12 0 20Z" fill="url(#edge)" />
            <path d="M12 18Q10 30 22 33 29 33 33 28 25 30 20 26 16 22 18 15 13 14 12 18Z" fill="#0a3f8c" />
            <path d="M18 17Q16 24 22 27 28 29 33 25L37 29V20L26 23Q21 22 22 18Z" fill="#18224f" />
          </svg>
        </TaskIcon>
        <TaskIcon>
          <svg className="h-9 w-9" viewBox="0 0 36 36">
            <rect x="10" y="1" width="24" height="19" rx="2" fill="#0a64ae" />
            <path d="M22 1H34V10H22Z" fill="#3ba7e8" />
            <path d="M10 10H22V19H10Z" fill="#1377c9" />
            <path d="M10 17 22 25 36 17V32Q36 35 33 35H10Z" fill="#1f95dd" />
            <path d="M36 17 14 35H33Q36 35 36 32Z" fill="#53c1f2" />
            <rect x="0" y="9" width="18" height="18" rx="2" fill="#0b6bbd" />
            <circle cx="9" cy="18" r="4.3" fill="none" stroke="#fff" strokeWidth="2.2" />
          </svg>
        </TaskIcon>
        <TaskIcon>
          <svg className="h-9 w-9" viewBox="0 0 36 36">
            {[0, 60, 120].map((a) => (
              <rect key={a} x="12.5" y="1" width="11" height="34" rx="3" fill="#7b848c" transform={`rotate(${a} 18 18)`} />
            ))}
            <circle cx="18" cy="18" r="12.5" fill="#7b848c" />
            <circle cx="18" cy="18" r="9" fill="#e6e9ec" />
            <circle cx="18" cy="18" r="6.5" fill="#1b65b0" />
          </svg>
        </TaskIcon>
        <TaskIcon>
          <Chrome />
        </TaskIcon>
        <TaskIcon>
          <svg className="h-9 w-9" viewBox="0 0 36 36">
            <circle cx="18" cy="18" r="18" fill="#ff0000" />
            <circle cx="18" cy="18" r="10" fill="none" stroke="#fff" strokeWidth="1.6" />
            <path d="M14.5 12.5 24 18 14.5 23.5Z" fill="#fff" />
          </svg>
        </TaskIcon>
        <TaskIcon dot badge={<div className="absolute left-[36px] top-[13px] flex h-5 w-[22px] items-center justify-center rounded-full bg-[#d31b3f] text-[13.5px] font-semibold leading-none">9+</div>}>
          <Teams />
        </TaskIcon>
        <TaskIcon dot>
          <svg className="h-9 w-9" viewBox="0 0 36 36">
            <path d="M26 0 36 5V31L26 36 24 34V2Z" fill="#24a3ee" />
            <path d="M26 0 27 9 4 27 0 23.5Z" fill="#0b7ec9" />
            <path d="M26 36 27 27 4 9 0 12.5Z" fill="#1189d6" />
          </svg>
        </TaskIcon>
        <TaskIcon dot badge={<div className="absolute left-[35px] top-[8px] flex h-[23px] w-[23px] items-center justify-center rounded-full bg-[#5f9a35] text-[13px] leading-none text-[#dcebcf]">A</div>}>
          <Chrome />
        </TaskIcon>
        <div className="relative ml-1 mt-1 flex h-[60px] w-[58px] items-center justify-center rounded-md border border-[#3a3d42] bg-[#2f3236]">
          <svg className="h-8 w-8" viewBox="0 0 32 32">
            <path d="M6 1H31V25L26 31H1V7Z" fill={BLUE} stroke="#fff" strokeWidth="2" />
            <path d="M21.5 10H16Q11.5 10 11.5 14.5V17.5Q11.5 22 16 22H21.5" fill="none" stroke="#fff" strokeWidth="3" />
          </svg>
          <div className="absolute bottom-0.5 h-[5px] w-6 rounded-full bg-[#4cc2ff]" />
        </div>
      </div>
      <div className="ml-auto flex items-center pr-8">
        <Chevron className="h-2.5 w-4 rotate-180" />
        <svg className="ml-[29px] h-6 w-[26px]" viewBox="0 0 26 24">
          <path d="M5 19Q0 18 0 13 1 8 6 8 8 2 13 2 19 3 20 9V19Z" fill="#c8c8c8" />
          <path d="M6 8Q8 2 13 2 19 3 20 9L10 14Z" fill="#8f8f8f" />
          <circle cx="19" cy="16.5" r="7" fill="#e0262c" />
          <path d="M16.2 13.7 21.8 19.3M21.8 13.7 16.2 19.3" stroke="#fff" strokeWidth="1.8" />
        </svg>
        <Svg className="ml-[22px] h-[19px] w-6" box="0 0 24 19" sw={2}>
          <path d="M1 7Q12-4 23 7M4.5 10.8Q12 3.5 19.5 10.8M8 14.3Q12 10.5 16 14.3" />
          <circle cx="12" cy="17" r="1.3" fill="currentColor" stroke="none" />
        </Svg>
        <Svg className="ml-[11px] h-[19px] w-6" box="0 0 24 19" sw={1.7}>
          <path d="M1 6.5H5L10 1.5V17.5L5 12.5H1ZM13 6Q15.5 9.5 13 13" />
          <path d="M16 3Q20.5 9.5 16 16" />
          <path d="M19.5 1Q25 9.5 19.5 18" opacity="0.35" />
        </Svg>
        <Svg className="ml-3 h-5 w-6" box="0 0 24 20" sw={1.8}>
          <path d="M8 4H19Q21 4 21 6V16Q21 18 19 18H3Q1 18 1 16V11" />
          <path d="M8 7H18V15H5Z" fill="currentColor" stroke="none" />
          <path d="M22 8V14" strokeWidth="2.4" />
          <path d="M5 0 0 7H3L1.5 11 7 4.5H4Z" fill="currentColor" stroke="none" />
        </Svg>
        <div className="-mt-1 ml-[26px] flex flex-col text-right text-[17.5px] leading-6">
          <span>4:00 PM</span>
          <span>2/7/2024</span>
        </div>
        <Svg className="ml-3 h-[23px] w-5" box="0 0 20 23" sw={1.7}>
          <path d="M1 18H19L17 14V8.5Q16.5 1.5 10 1.5 3.5 1.5 3 8.5V14ZM7.5 19Q8 21.8 10 21.8 12 21.8 12.5 19" />
        </Svg>
      </div>
    </div>
  );
}

/* ------------------------------------------------------------------ */

export default function App() {
  return (
    <div className="relative flex h-[1600px] w-[2560px] flex-col overflow-hidden bg-[#fafafa] font-['Noto_Sans',sans-serif]">
      <TitleBar />
      <MenuBar />
      <div className="relative flex min-h-0 flex-1 flex-col">
        <Scene />
        <div className="absolute inset-x-0 top-0 h-[117px] bg-[#08063f]" />
        <Header />
        <StageBar />
        <div className="relative flex flex-1 justify-between">
          <div className="flex flex-col items-start pt-[289px]">
            <ToolBar />
            <div className="mt-5 flex w-[78px] flex-col gap-3 rounded-r border border-l-0 border-[#c0c0c0] bg-white py-[5px] pl-1.5">
              <div className="flex h-[66px] w-[66px] items-center justify-center rounded-full bg-[#e6f1fd]">
                <Spool n={1} className="h-[33px] w-[33px]" />
              </div>
              <div className="flex h-[66px] w-[66px] items-center justify-center rounded-full">
                <Spool n={2} className="h-[33px] w-[33px]" />
              </div>
            </div>
            <div className="flex-1" />
            <ObjectInfo />
          </div>
          <RotatePanel />
          <div className="flex flex-col items-end pt-3">
            <div className="mr-[74px]">
              <PrintSettings />
            </div>
            <div className="mb-[29px] mr-8 mt-auto flex h-[105px] w-[507px] items-center justify-center rounded border-[1.5px] border-[#c0c0c0] bg-white">
              <div className="flex h-12 w-[441px] items-center justify-center bg-[#196ef0] text-[19.35px] text-white">Slice</div>
            </div>
          </div>
        </div>
      </div>
      <TaskBar />
      <Dialog />
    </div>
  );
}
